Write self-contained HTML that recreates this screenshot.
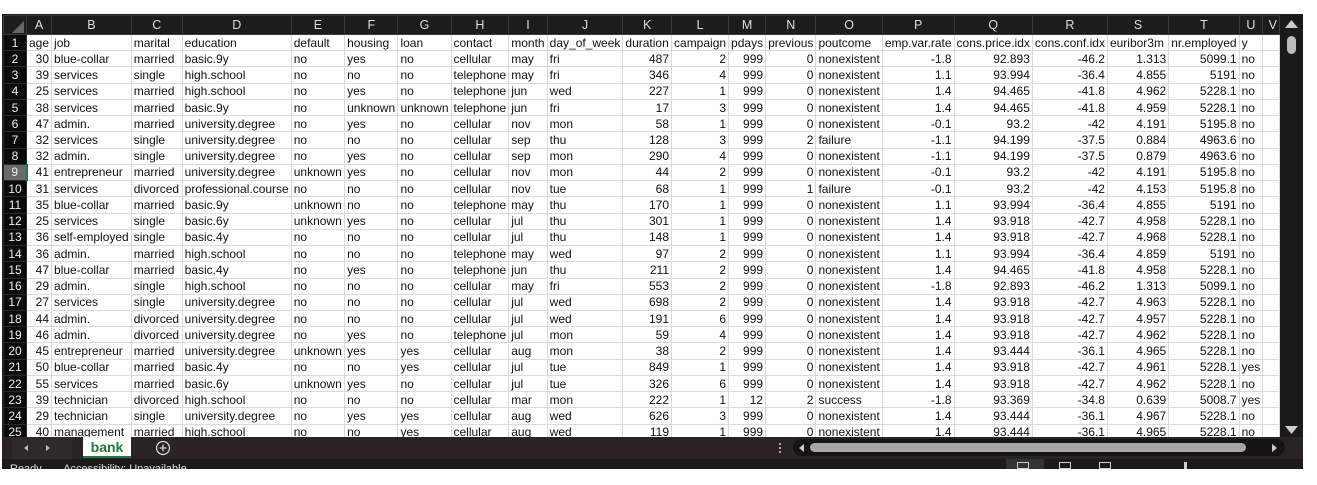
<!DOCTYPE html>
<html><head><meta charset="utf-8">
<style>
*{margin:0;padding:0;box-sizing:border-box}
body{width:1317px;height:485px;background:#fff;position:relative;overflow:hidden;font-family:"Liberation Sans",sans-serif}
#frame{position:absolute;left:2px;top:14px;width:1301px;height:455px;background:#1f1a1c}
#grid{position:absolute;left:3px;top:15px;width:1277px;height:422px;overflow:hidden;background:#fff}
table{border-collapse:collapse;table-layout:fixed;font-size:12px;color:#111}
td{height:16.24px;border:1px solid #dadada;padding:0 2px;white-space:nowrap;overflow:hidden;line-height:14px}
tr.h td{height:19px;background:#1c1c1c;color:#ddd;text-align:center;border:1px solid #3a3a3a;font-size:12.5px}
td.rh{background:#0b0b0b;color:#eee;text-align:center;border-color:#2a2a2a;padding:0}
td.sel{background:#6a6a6a;border-right:2px solid #1f7a3f}
td.r{text-align:right}
#vs{position:absolute;left:1280px;top:15px;width:23px;height:422px;background:#1a1a1a}
#tabs{position:absolute;left:2px;top:437px;width:1301px;height:22px;background:#2b2226}
#status{position:absolute;left:2px;top:459px;width:1301px;height:10px;background:#1e1a1c;overflow:hidden}
</style></head><body>
<div id="frame"></div>
<div id="grid">
<table>
<colgroup><col style="width:21px"><col style="width:24px"><col style="width:78px"><col style="width:54px"><col style="width:107px"><col style="width:55px"><col style="width:55px"><col style="width:52px"><col style="width:57px"><col style="width:39px"><col style="width:75px"><col style="width:50px"><col style="width:54px"><col style="width:36px"><col style="width:49px"><col style="width:65px"><col style="width:71px"><col style="width:78px"><col style="width:72px"><col style="width:73px"><col style="width:59px"><col style="width:19px"><col style="width:34px"></colgroup>
<tr class="h"><td><svg width="12" height="12" style="display:block;margin:3px 0 0 6px"><polygon points="12,0 12,12 0,12" fill="#666"/></svg></td><td>A</td><td>B</td><td>C</td><td>D</td><td>E</td><td>F</td><td>G</td><td>H</td><td>I</td><td>J</td><td>K</td><td>L</td><td>M</td><td>N</td><td>O</td><td>P</td><td>Q</td><td>R</td><td>S</td><td>T</td><td>U</td><td style="text-align:right">V</td></tr>
<tr><td class="rh">1</td><td>age</td><td>job</td><td>marital</td><td>education</td><td>default</td><td>housing</td><td>loan</td><td>contact</td><td>month</td><td>day_of_week</td><td>duration</td><td>campaign</td><td>pdays</td><td>previous</td><td>poutcome</td><td>emp.var.rate</td><td>cons.price.idx</td><td>cons.conf.idx</td><td>euribor3m</td><td>nr.employed</td><td>y</td><td></td></tr>
<tr><td class="rh">2</td><td class="r">30</td><td>blue-collar</td><td>married</td><td>basic.9y</td><td>no</td><td>yes</td><td>no</td><td>cellular</td><td>may</td><td>fri</td><td class="r">487</td><td class="r">2</td><td class="r">999</td><td class="r">0</td><td>nonexistent</td><td class="r">-1.8</td><td class="r">92.893</td><td class="r">-46.2</td><td class="r">1.313</td><td class="r">5099.1</td><td>no</td><td></td></tr>
<tr><td class="rh">3</td><td class="r">39</td><td>services</td><td>single</td><td>high.school</td><td>no</td><td>no</td><td>no</td><td>telephone</td><td>may</td><td>fri</td><td class="r">346</td><td class="r">4</td><td class="r">999</td><td class="r">0</td><td>nonexistent</td><td class="r">1.1</td><td class="r">93.994</td><td class="r">-36.4</td><td class="r">4.855</td><td class="r">5191</td><td>no</td><td></td></tr>
<tr><td class="rh">4</td><td class="r">25</td><td>services</td><td>married</td><td>high.school</td><td>no</td><td>yes</td><td>no</td><td>telephone</td><td>jun</td><td>wed</td><td class="r">227</td><td class="r">1</td><td class="r">999</td><td class="r">0</td><td>nonexistent</td><td class="r">1.4</td><td class="r">94.465</td><td class="r">-41.8</td><td class="r">4.962</td><td class="r">5228.1</td><td>no</td><td></td></tr>
<tr><td class="rh">5</td><td class="r">38</td><td>services</td><td>married</td><td>basic.9y</td><td>no</td><td>unknown</td><td>unknown</td><td>telephone</td><td>jun</td><td>fri</td><td class="r">17</td><td class="r">3</td><td class="r">999</td><td class="r">0</td><td>nonexistent</td><td class="r">1.4</td><td class="r">94.465</td><td class="r">-41.8</td><td class="r">4.959</td><td class="r">5228.1</td><td>no</td><td></td></tr>
<tr><td class="rh">6</td><td class="r">47</td><td>admin.</td><td>married</td><td>university.degree</td><td>no</td><td>yes</td><td>no</td><td>cellular</td><td>nov</td><td>mon</td><td class="r">58</td><td class="r">1</td><td class="r">999</td><td class="r">0</td><td>nonexistent</td><td class="r">-0.1</td><td class="r">93.2</td><td class="r">-42</td><td class="r">4.191</td><td class="r">5195.8</td><td>no</td><td></td></tr>
<tr><td class="rh">7</td><td class="r">32</td><td>services</td><td>single</td><td>university.degree</td><td>no</td><td>no</td><td>no</td><td>cellular</td><td>sep</td><td>thu</td><td class="r">128</td><td class="r">3</td><td class="r">999</td><td class="r">2</td><td>failure</td><td class="r">-1.1</td><td class="r">94.199</td><td class="r">-37.5</td><td class="r">0.884</td><td class="r">4963.6</td><td>no</td><td></td></tr>
<tr><td class="rh">8</td><td class="r">32</td><td>admin.</td><td>single</td><td>university.degree</td><td>no</td><td>yes</td><td>no</td><td>cellular</td><td>sep</td><td>mon</td><td class="r">290</td><td class="r">4</td><td class="r">999</td><td class="r">0</td><td>nonexistent</td><td class="r">-1.1</td><td class="r">94.199</td><td class="r">-37.5</td><td class="r">0.879</td><td class="r">4963.6</td><td>no</td><td></td></tr>
<tr><td class="rh sel">9</td><td class="r">41</td><td>entrepreneur</td><td>married</td><td>university.degree</td><td>unknown</td><td>yes</td><td>no</td><td>cellular</td><td>nov</td><td>mon</td><td class="r">44</td><td class="r">2</td><td class="r">999</td><td class="r">0</td><td>nonexistent</td><td class="r">-0.1</td><td class="r">93.2</td><td class="r">-42</td><td class="r">4.191</td><td class="r">5195.8</td><td>no</td><td></td></tr>
<tr><td class="rh">10</td><td class="r">31</td><td>services</td><td>divorced</td><td>professional.course</td><td>no</td><td>no</td><td>no</td><td>cellular</td><td>nov</td><td>tue</td><td class="r">68</td><td class="r">1</td><td class="r">999</td><td class="r">1</td><td>failure</td><td class="r">-0.1</td><td class="r">93.2</td><td class="r">-42</td><td class="r">4.153</td><td class="r">5195.8</td><td>no</td><td></td></tr>
<tr><td class="rh">11</td><td class="r">35</td><td>blue-collar</td><td>married</td><td>basic.9y</td><td>unknown</td><td>no</td><td>no</td><td>telephone</td><td>may</td><td>thu</td><td class="r">170</td><td class="r">1</td><td class="r">999</td><td class="r">0</td><td>nonexistent</td><td class="r">1.1</td><td class="r">93.994</td><td class="r">-36.4</td><td class="r">4.855</td><td class="r">5191</td><td>no</td><td></td></tr>
<tr><td class="rh">12</td><td class="r">25</td><td>services</td><td>single</td><td>basic.6y</td><td>unknown</td><td>yes</td><td>no</td><td>cellular</td><td>jul</td><td>thu</td><td class="r">301</td><td class="r">1</td><td class="r">999</td><td class="r">0</td><td>nonexistent</td><td class="r">1.4</td><td class="r">93.918</td><td class="r">-42.7</td><td class="r">4.958</td><td class="r">5228.1</td><td>no</td><td></td></tr>
<tr><td class="rh">13</td><td class="r">36</td><td>self-employed</td><td>single</td><td>basic.4y</td><td>no</td><td>no</td><td>no</td><td>cellular</td><td>jul</td><td>thu</td><td class="r">148</td><td class="r">1</td><td class="r">999</td><td class="r">0</td><td>nonexistent</td><td class="r">1.4</td><td class="r">93.918</td><td class="r">-42.7</td><td class="r">4.968</td><td class="r">5228.1</td><td>no</td><td></td></tr>
<tr><td class="rh">14</td><td class="r">36</td><td>admin.</td><td>married</td><td>high.school</td><td>no</td><td>no</td><td>no</td><td>telephone</td><td>may</td><td>wed</td><td class="r">97</td><td class="r">2</td><td class="r">999</td><td class="r">0</td><td>nonexistent</td><td class="r">1.1</td><td class="r">93.994</td><td class="r">-36.4</td><td class="r">4.859</td><td class="r">5191</td><td>no</td><td></td></tr>
<tr><td class="rh">15</td><td class="r">47</td><td>blue-collar</td><td>married</td><td>basic.4y</td><td>no</td><td>yes</td><td>no</td><td>telephone</td><td>jun</td><td>thu</td><td class="r">211</td><td class="r">2</td><td class="r">999</td><td class="r">0</td><td>nonexistent</td><td class="r">1.4</td><td class="r">94.465</td><td class="r">-41.8</td><td class="r">4.958</td><td class="r">5228.1</td><td>no</td><td></td></tr>
<tr><td class="rh">16</td><td class="r">29</td><td>admin.</td><td>single</td><td>high.school</td><td>no</td><td>no</td><td>no</td><td>cellular</td><td>may</td><td>fri</td><td class="r">553</td><td class="r">2</td><td class="r">999</td><td class="r">0</td><td>nonexistent</td><td class="r">-1.8</td><td class="r">92.893</td><td class="r">-46.2</td><td class="r">1.313</td><td class="r">5099.1</td><td>no</td><td></td></tr>
<tr><td class="rh">17</td><td class="r">27</td><td>services</td><td>single</td><td>university.degree</td><td>no</td><td>no</td><td>no</td><td>cellular</td><td>jul</td><td>wed</td><td class="r">698</td><td class="r">2</td><td class="r">999</td><td class="r">0</td><td>nonexistent</td><td class="r">1.4</td><td class="r">93.918</td><td class="r">-42.7</td><td class="r">4.963</td><td class="r">5228.1</td><td>no</td><td></td></tr>
<tr><td class="rh">18</td><td class="r">44</td><td>admin.</td><td>divorced</td><td>university.degree</td><td>no</td><td>no</td><td>no</td><td>cellular</td><td>jul</td><td>wed</td><td class="r">191</td><td class="r">6</td><td class="r">999</td><td class="r">0</td><td>nonexistent</td><td class="r">1.4</td><td class="r">93.918</td><td class="r">-42.7</td><td class="r">4.957</td><td class="r">5228.1</td><td>no</td><td></td></tr>
<tr><td class="rh">19</td><td class="r">46</td><td>admin.</td><td>divorced</td><td>university.degree</td><td>no</td><td>yes</td><td>no</td><td>telephone</td><td>jul</td><td>mon</td><td class="r">59</td><td class="r">4</td><td class="r">999</td><td class="r">0</td><td>nonexistent</td><td class="r">1.4</td><td class="r">93.918</td><td class="r">-42.7</td><td class="r">4.962</td><td class="r">5228.1</td><td>no</td><td></td></tr>
<tr><td class="rh">20</td><td class="r">45</td><td>entrepreneur</td><td>married</td><td>university.degree</td><td>unknown</td><td>yes</td><td>yes</td><td>cellular</td><td>aug</td><td>mon</td><td class="r">38</td><td class="r">2</td><td class="r">999</td><td class="r">0</td><td>nonexistent</td><td class="r">1.4</td><td class="r">93.444</td><td class="r">-36.1</td><td class="r">4.965</td><td class="r">5228.1</td><td>no</td><td></td></tr>
<tr><td class="rh">21</td><td class="r">50</td><td>blue-collar</td><td>married</td><td>basic.4y</td><td>no</td><td>no</td><td>yes</td><td>cellular</td><td>jul</td><td>tue</td><td class="r">849</td><td class="r">1</td><td class="r">999</td><td class="r">0</td><td>nonexistent</td><td class="r">1.4</td><td class="r">93.918</td><td class="r">-42.7</td><td class="r">4.961</td><td class="r">5228.1</td><td>yes</td><td></td></tr>
<tr><td class="rh">22</td><td class="r">55</td><td>services</td><td>married</td><td>basic.6y</td><td>unknown</td><td>yes</td><td>no</td><td>cellular</td><td>jul</td><td>tue</td><td class="r">326</td><td class="r">6</td><td class="r">999</td><td class="r">0</td><td>nonexistent</td><td class="r">1.4</td><td class="r">93.918</td><td class="r">-42.7</td><td class="r">4.962</td><td class="r">5228.1</td><td>no</td><td></td></tr>
<tr><td class="rh">23</td><td class="r">39</td><td>technician</td><td>divorced</td><td>high.school</td><td>no</td><td>no</td><td>no</td><td>cellular</td><td>mar</td><td>mon</td><td class="r">222</td><td class="r">1</td><td class="r">12</td><td class="r">2</td><td>success</td><td class="r">-1.8</td><td class="r">93.369</td><td class="r">-34.8</td><td class="r">0.639</td><td class="r">5008.7</td><td>yes</td><td></td></tr>
<tr><td class="rh">24</td><td class="r">29</td><td>technician</td><td>single</td><td>university.degree</td><td>no</td><td>yes</td><td>yes</td><td>cellular</td><td>aug</td><td>wed</td><td class="r">626</td><td class="r">3</td><td class="r">999</td><td class="r">0</td><td>nonexistent</td><td class="r">1.4</td><td class="r">93.444</td><td class="r">-36.1</td><td class="r">4.967</td><td class="r">5228.1</td><td>no</td><td></td></tr>
<tr><td class="rh">25</td><td class="r">40</td><td>management</td><td>married</td><td>high.school</td><td>no</td><td>no</td><td>yes</td><td>cellular</td><td>aug</td><td>wed</td><td class="r">119</td><td class="r">1</td><td class="r">999</td><td class="r">0</td><td>nonexistent</td><td class="r">1.4</td><td class="r">93.444</td><td class="r">-36.1</td><td class="r">4.965</td><td class="r">5228.1</td><td>no</td><td></td></tr>
</table>
</div>
<div id="vs">
<svg width="23" height="422" style="position:absolute;left:0;top:0">
<polygon points="5,13 11.5,5 18,13" fill="#ccc"/>
<rect x="7" y="21" width="9" height="18" rx="4.5" fill="#bbb"/>
<polygon points="5,411 11.5,419 18,411" fill="#ccc"/>
</svg>
</div>
<div id="tabs">
<svg width="1301" height="22" style="position:absolute;left:0;top:0">
<rect x="10" y="0" width="60" height="22" fill="#2e2a2c"/>
<polygon points="26,8 22,11 26,14" fill="#bbb"/>
<polygon points="44,8 48,11 44,14" fill="#bbb"/>
<rect x="81" y="0" width="48" height="20" fill="#fff"/>
<rect x="81" y="19" width="48" height="2" fill="#1f7a3f"/>
<circle cx="161" cy="11" r="6.5" fill="none" stroke="#ddd" stroke-width="1.2"/>
<line x1="157.5" y1="11" x2="164.5" y2="11" stroke="#ddd" stroke-width="1.2"/>
<line x1="161" y1="7.5" x2="161" y2="14.5" stroke="#ddd" stroke-width="1.2"/>
<circle cx="778" cy="7" r="1" fill="#ccc"/><circle cx="778" cy="11" r="1" fill="#ccc"/><circle cx="778" cy="15" r="1" fill="#ccc"/>
<rect x="791" y="2" width="492" height="17" rx="8.5" fill="#141414"/>
<polygon points="802,7 797,11 802,15" fill="#ccc"/>
<rect x="808" y="6" width="436" height="9" rx="4.5" fill="#a6a6a6"/>
<polygon points="1270,7 1275,11 1270,15" fill="#ccc"/>
</svg>
<div style="position:absolute;left:81px;top:1px;width:48px;text-align:center;font-weight:bold;font-size:14px;color:#1f7a3f;line-height:18px">bank</div>
</div>
<div id="status">
<div style="position:absolute;left:8px;top:4px;font-size:11px;color:#ddd">Ready&nbsp;&nbsp;&nbsp;&nbsp;&nbsp;&nbsp;&nbsp;Accessibility: Unavailable</div>
<div style="position:absolute;left:1004px;top:0;width:38px;height:10px;background:#333"></div>
<div style="position:absolute;left:1015px;top:3px;width:12px;height:7px;border:1px solid #ccc"></div>
<div style="position:absolute;left:1057px;top:3px;width:12px;height:7px;border:1px solid #ccc"></div>
<div style="position:absolute;left:1097px;top:3px;width:12px;height:7px;border:1px solid #ccc"></div>
<div style="position:absolute;left:1182px;top:3px;width:3px;height:7px;background:#ccc"></div>
</div>
</body></html>
